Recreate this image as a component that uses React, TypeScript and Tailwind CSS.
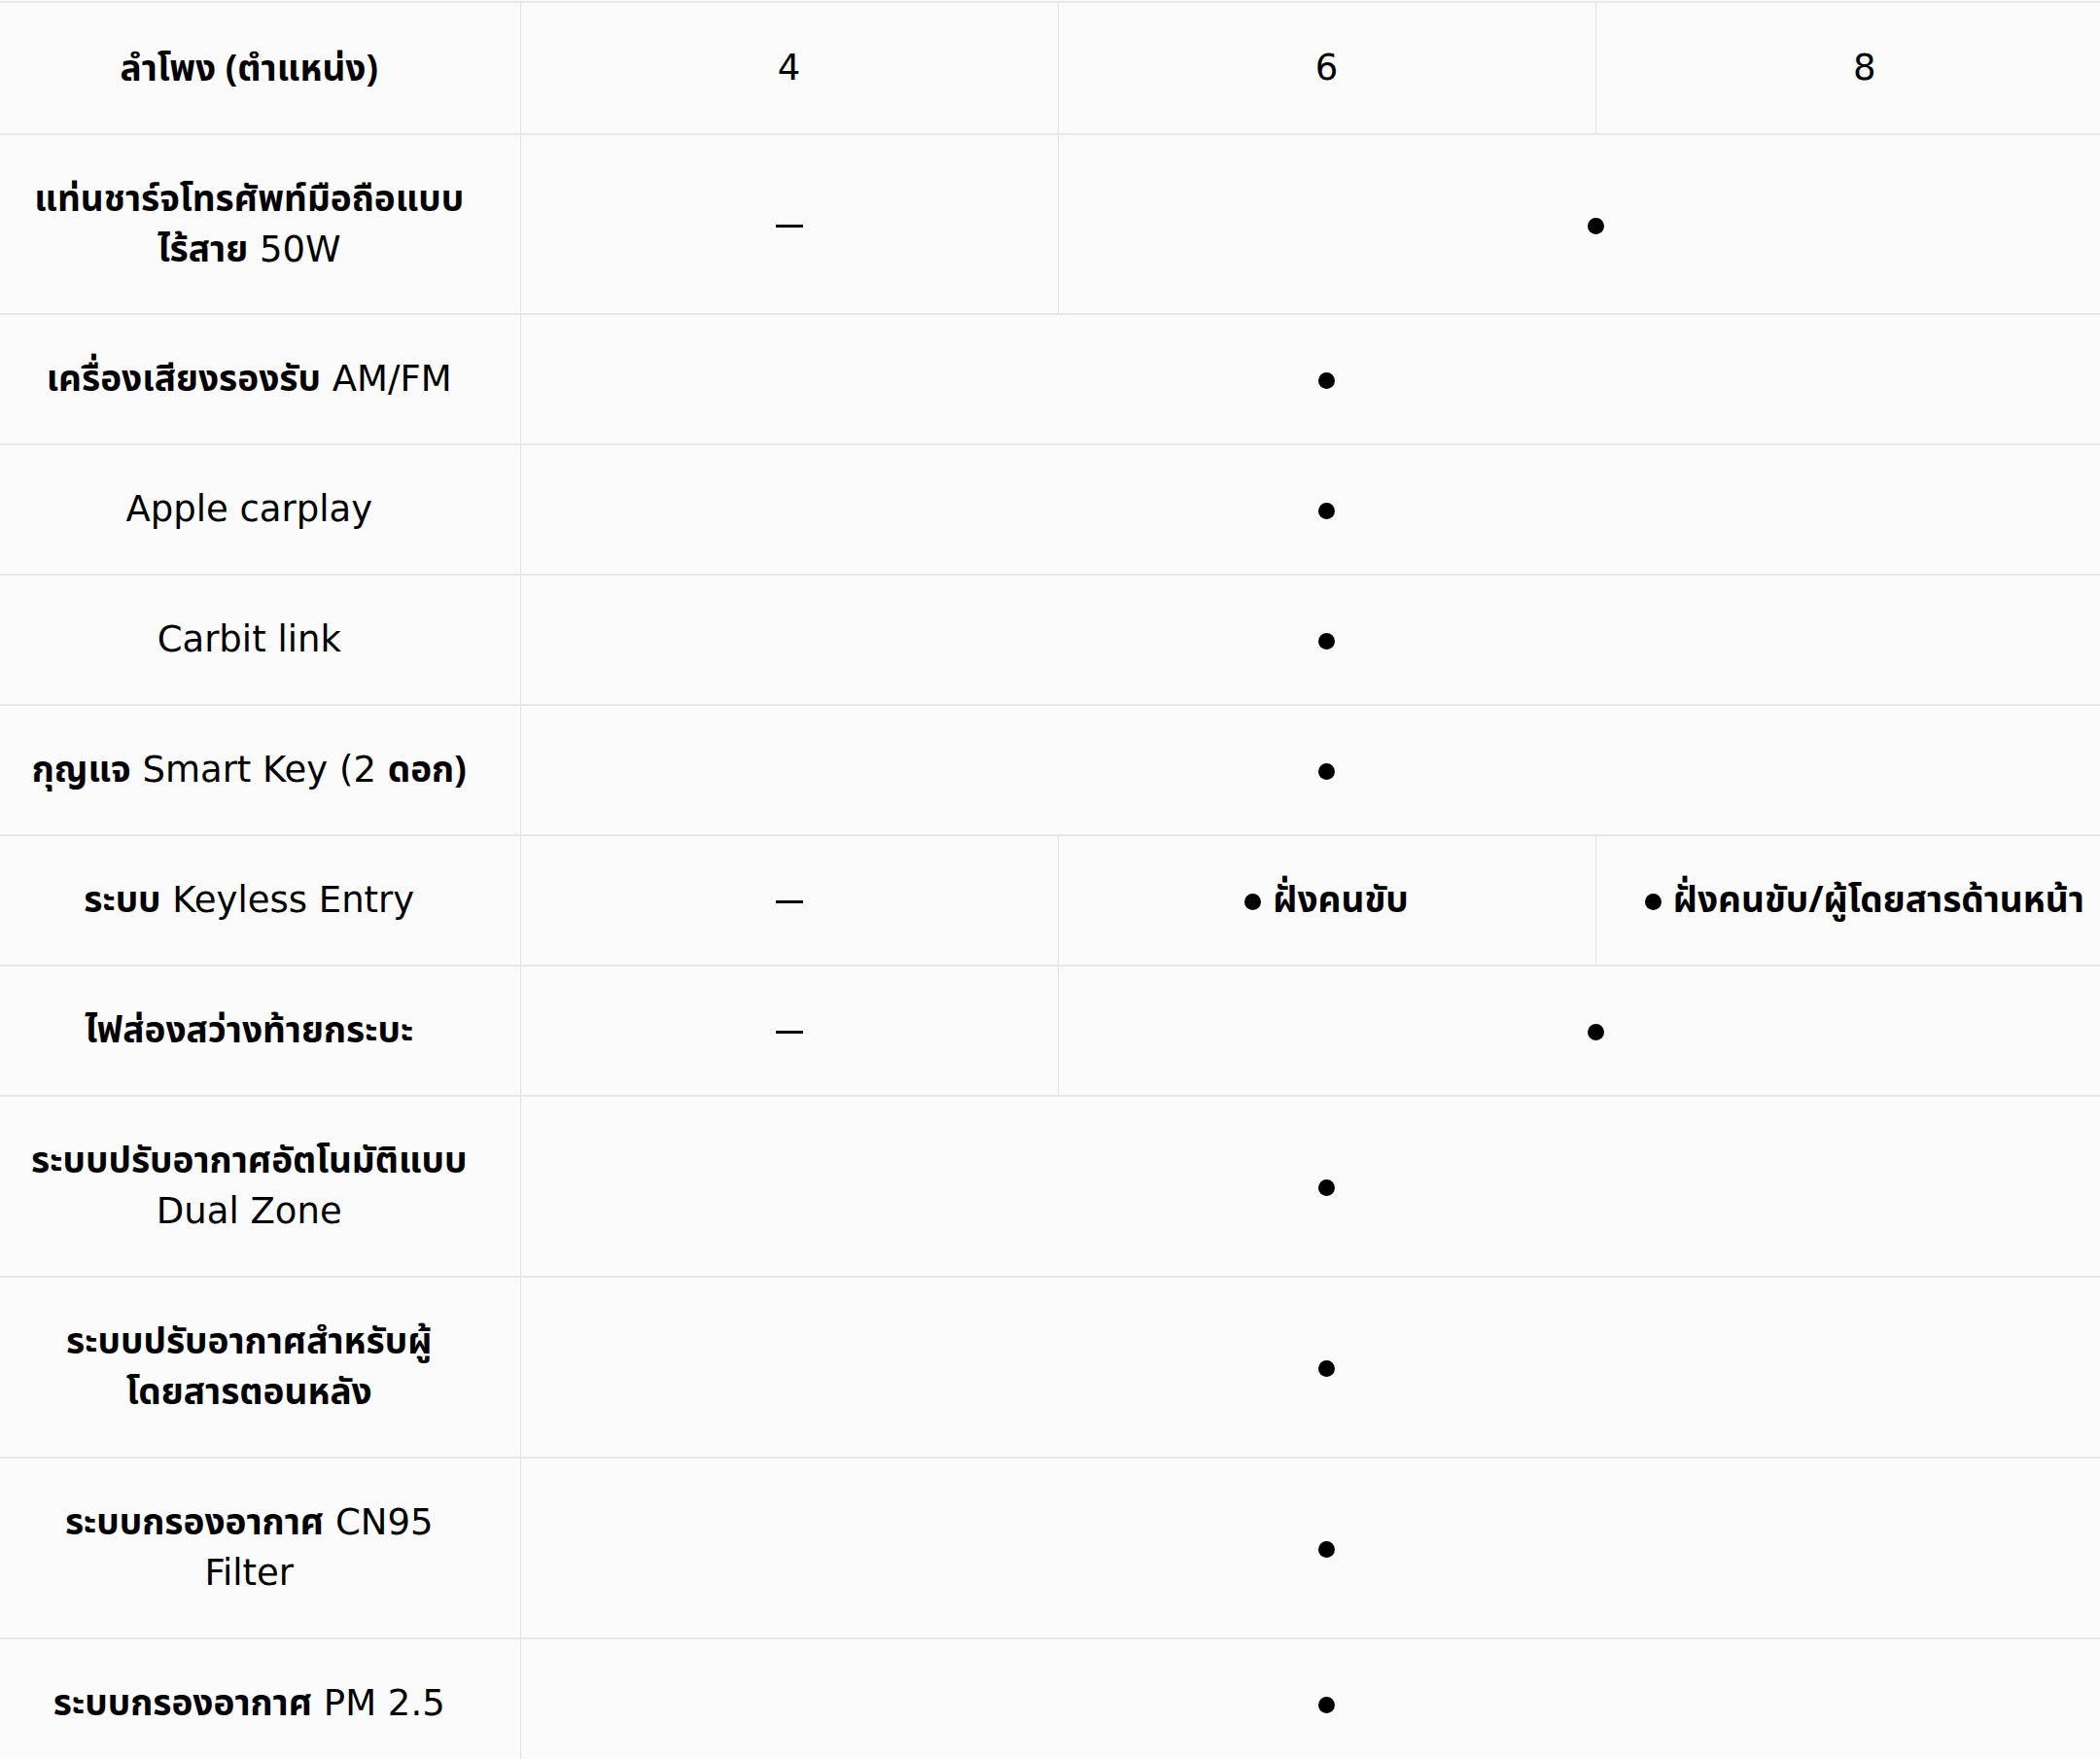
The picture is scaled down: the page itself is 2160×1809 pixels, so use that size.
import React from "react";

type Cell = { content: React.ReactNode; span?: number };
type Row = { label: string[]; cells: Cell[] };

const Dot = () => (
  <span className="inline-block w-[17px] h-[17px] rounded-full bg-black align-middle" />
);

const Dash = () => (
  <span className="inline-block w-[28px] h-[3px] bg-black align-middle" aria-label="—" />
);

const thaiFont = { fontFamily: '"Noto Sans Thai", "Noto Sans", Tahoma, sans-serif' };

function Mixed({ text }: { text: string }) {
  const parts = text.split(/([\u0E00-\u0E7F()\/]+(?:\s+[\u0E00-\u0E7F()\/]+)*)/);
  return (
    <>
      {parts.map((p, i) =>
        /[\u0E00-\u0E7F]/.test(p) ? (
          <span key={i} className="font-bold text-[37px]" style={thaiFont}>
            {p}
          </span>
        ) : (
          <span key={i}>{p}</span>
        )
      )}
    </>
  );
}

const DotText = ({ text }: { text: string }) => (
  <span>
    <Dot />
    <span className="font-bold text-[37px] ml-[12px]" style={thaiFont}>
      {text}
    </span>
  </span>
);

const rows: Row[] = [
  {
    label: ["ลำโพง (ตำแหน่ง)"],
    cells: [{ content: "4" }, { content: "6" }, { content: "8" }],
  },
  {
    label: ["แท่นชาร์จโทรศัพท์มือถือแบบ", "ไร้สาย 50W"],
    cells: [{ content: <Dash /> }, { content: <Dot />, span: 2 }],
  },
  { label: ["เครื่องเสียงรองรับ AM/FM"], cells: [{ content: <Dot />, span: 3 }] },
  { label: ["Apple carplay"], cells: [{ content: <Dot />, span: 3 }] },
  { label: ["Carbit link"], cells: [{ content: <Dot />, span: 3 }] },
  { label: ["กุญแจ Smart Key (2 ดอก)"], cells: [{ content: <Dot />, span: 3 }] },
  {
    label: ["ระบบ Keyless Entry"],
    cells: [
      { content: <Dash /> },
      { content: <DotText text="ฝั่งคนขับ" /> },
      { content: <DotText text="ฝั่งคนขับ/ผู้โดยสารด้านหน้า" /> },
    ],
  },
  {
    label: ["ไฟส่องสว่างท้ายกระบะ"],
    cells: [{ content: <Dash /> }, { content: <Dot />, span: 2 }],
  },
  {
    label: ["ระบบปรับอากาศอัตโนมัติแบบ", "Dual Zone"],
    cells: [{ content: <Dot />, span: 3 }],
  },
  {
    label: ["ระบบปรับอากาศสำหรับผู้", "โดยสารตอนหลัง"],
    cells: [{ content: <Dot />, span: 3 }],
  },
  {
    label: ["ระบบกรองอากาศ CN95", "Filter"],
    cells: [{ content: <Dot />, span: 3 }],
  },
  { label: ["ระบบกรองอากาศ PM 2.5"], cells: [{ content: <Dot />, span: 3 }] },
];

export default function App() {
  return (
    <div
      className="w-full h-[1809px] overflow-hidden bg-[#fbfbfb] text-black pt-px"
      style={{ fontFamily: '"DejaVu Sans", "Noto Sans Thai", "Noto Sans", sans-serif' }}
    >
      <table className="table-fixed border-collapse w-[2194px] text-[37px] leading-[52px]">
        <colgroup>
          <col className="w-[535px]" />
          <col className="w-[553px]" />
          <col className="w-[553px]" />
          <col className="w-[553px]" />
        </colgroup>
        <tbody>
          {rows.map((r, ri) => (
            <tr key={ri} className={ri === 0 ? "border-t-2 border-[#e8e8e8]" : ""}>
              <td
                className={`border-b-2 border-[#e8e8e8] pl-0 pr-[22px] ${
                  ri === 0 ? "pt-[42px] pb-[40px]" : ri === 1 ? "pt-[40px] pb-[39px]" : "py-[40px]"
                } text-center whitespace-nowrap align-middle`}
              >
                {r.label.map((l, li) => (
                  <div key={li} className="h-[52px] overflow-visible">
                    <Mixed text={l} />
                  </div>
                ))}
              </td>
              {r.cells.map((c, ci) => (
                <td
                  key={ci}
                  colSpan={c.span ?? 1}
                  className="border-b-2 border-b-[#e8e8e8] border-l border-l-[#e2e2e2] text-center whitespace-nowrap align-middle"
                >
                  <div className="h-[52px] overflow-visible">{c.content}</div>
                </td>
              ))}
            </tr>
          ))}
        </tbody>
      </table>
    </div>
  );
}
